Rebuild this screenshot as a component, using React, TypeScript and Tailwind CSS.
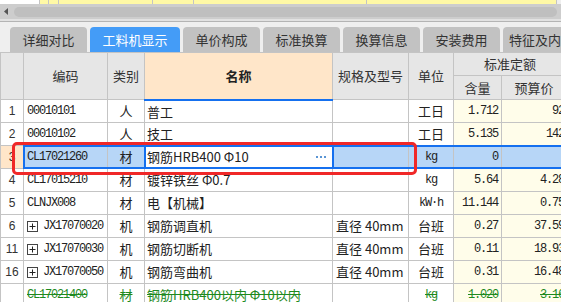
import React from 'react';

const CJK = "font-['Noto_Sans_CJK_SC','Noto_Sans',sans-serif]";
const MONO = "font-['Liberation_Mono','Noto_Sans_CJK_SC',monospace] text-[12px] tracking-[-1.2px]";

type Row = {
  num: string;
  code: string;
  tree?: boolean;
  type: string;
  name: string;
  spec: string;
  unit: string;
  qty: string;
  price: string;
};

const rows: Row[] = [
  { num: '1', code: '00010101', type: '人', name: '普工', spec: '', unit: '工日', qty: '1.712', price: '92' },
  { num: '2', code: '00010102', type: '人', name: '技工', spec: '', unit: '工日', qty: '5.135', price: '142' },
  { num: '3', code: 'CL17021260', type: '材', name: '钢筋HRB400 Φ10', spec: '', unit: 'kg', qty: '0', price: '' },
  { num: '4', code: 'CL17015210', type: '材', name: '镀锌铁丝 Φ0.7', spec: '', unit: 'kg', qty: '5.64', price: '4.28' },
  { num: '5', code: 'CLNJX008', type: '材', name: '电【机械】', spec: '', unit: 'kW·h', qty: '11.144', price: '0.75' },
  { num: '6', code: 'JX17070020', tree: true, type: '机', name: '钢筋调直机', spec: '直径 40mm', unit: '台班', qty: '0.27', price: '37.59' },
  { num: '11', code: 'JX17070030', tree: true, type: '机', name: '钢筋切断机', spec: '直径 40mm', unit: '台班', qty: '0.11', price: '18.93' },
  { num: '16', code: 'JX17070050', tree: true, type: '机', name: '钢筋弯曲机', spec: '直径 40mm', unit: '台班', qty: '0.31', price: '16.48' },
];

const tabs = ['详细对比', '工料机显示', '单价构成', '标准换算', '换算信息', '安装费用', '特征及内容'];

function PlusBox() {
  return (
    <svg width="11" height="11" viewBox="0 0 11 11" className="shrink-0">
      <rect x="0.5" y="0.5" width="10" height="10" fill="white" stroke="#444" />
      <path d="M2.5 5.5h6M5.5 2.5v6" stroke="#222" strokeWidth="1" />
    </svg>
  );
}

function Dots() {
  return (
    <svg width="10" height="2" viewBox="0 0 10 2" className="shrink-0">
      <rect x="0" y="0" width="2" height="2" fill="#5a95d4" />
      <rect x="4" y="0" width="2" height="2" fill="#5a95d4" />
      <rect x="8" y="0" width="2" height="2" fill="#5a95d4" />
    </svg>
  );
}

export default function App() {
  const cell = 'border border-[#c4c4c4] h-[23px] p-0 align-middle';
  const head = 'border border-[#c4c4c4] bg-[#e6e6e6] text-[13px] text-[#333] font-normal p-0';
  return (
    <div className={`relative w-[561px] h-[302px] overflow-hidden bg-[#efefef] ${CJK}`}>
      {/* yellow row remnant */}
      <div className="flex h-[4px] overflow-hidden">
        <div className="w-[40px] bg-white border-r border-[#c4c4c4]" />
        <div className="w-[9px] bg-[#fff9a6] border-r border-[#c4c4c4]" />
        <div className="w-[10px] bg-[#fff9a6] border-r border-[#c4c4c4]" />
        <div className="w-[94px] bg-[#fff9a6] border-r border-[#c4c4c4]" />
        <div className="w-[41px] bg-[#fff9a6] border-r border-[#c4c4c4]" />
        <div className="w-[173px] bg-[#fff9a6] border-r border-[#c4c4c4]" />
        <div className="w-[190px] bg-[#fff9a6] border-r border-[#c4c4c4]" />
      </div>

      {/* horizontal scrollbar */}
      <div className="flex items-center h-[15px] bg-[#cdcdcd] px-[4px] gap-[5px]">
        <svg width="5" height="7" viewBox="0 0 5 7">
          <path d="M4 0v7L0 3.5z" fill="#555" />
        </svg>
        <div className="flex-1 h-[10px] rounded-[5px] bg-[#bfbfbf]" />
      </div>
      <div className="h-[2px] bg-[#e2e2e2]" />
      <div className="h-[1px] bg-[#b4b4b4]" />

      {/* tabs */}
      <div className="flex items-end h-[30px] pl-[10px] gap-[3px] overflow-hidden">
        {tabs.map((t, i) => (
          <div
            key={t}
            className={
              i === 1
                ? 'shrink-0 w-[90px] h-[25px] rounded-t-[4px] bg-[#449cf7] text-white text-[13px] flex items-center justify-center'
                : 'shrink-0 w-[77px] h-[25px] rounded-t-[4px] bg-[#c2c2c2] text-[#333] text-[13px] flex items-center justify-center whitespace-nowrap'
            }
          >
            {t}
          </div>
        ))}
      </div>

      {/* grid */}
      <div className="relative w-[566px]">
        <table className="table-fixed border-collapse w-[566px] bg-white">
          <colgroup>
            <col className="w-[23px]" />
            <col className="w-[84px]" />
            <col className="w-[37px]" />
            <col className="w-[188px]" />
            <col className="w-[76px]" />
            <col className="w-[45px]" />
            <col className="w-[48px]" />
            <col className="w-[65px]" />
          </colgroup>
          <thead>
            <tr className="h-[23px]">
              <th rowSpan={2} className={head} />
              <th rowSpan={2} className={head}>编码</th>
              <th rowSpan={2} className={head}>类别</th>
              <th rowSpan={2} className="border border-[#c4c4c4] border-b-2 border-b-[#1570ef] bg-[#ffe6c9] text-[13px] text-[#222] font-bold p-0">
                名称
              </th>
              <th rowSpan={2} className={head}>规格及型号</th>
              <th rowSpan={2} className={head}>单位</th>
              <th colSpan={2} className={head}>标准定额</th>
            </tr>
            <tr className="h-[24px]">
              <th className={head}>含量</th>
              <th className={head}>预算价</th>
            </tr>
          </thead>
          <tbody>
            {rows.map((r) => {
              const sel = r.num === '3';
              const selBg = sel ? 'bg-[#b7d6f7]' : '';
              return (
                <tr key={r.num} className="h-[23px]">
                  <td className={`${cell} text-center text-[12px] text-[#333] font-['Liberation_Sans',sans-serif] ${sel ? 'bg-[#ffe6c9]' : ''}`}>
                    {r.num}
                  </td>
                  <td className={`${cell} ${selBg}`}>
                    <div className="flex items-center gap-[5px] pl-[3px] whitespace-nowrap overflow-hidden">
                      {r.tree && <PlusBox />}
                      <span className={`${MONO} text-[#222]`}>{r.code}</span>
                    </div>
                  </td>
                  <td className={`${cell} ${selBg} text-center text-[13px] text-[#222]`}>{r.type}</td>
                  <td className={`${cell} text-[13px] text-[#222]`}>
                    <div className="flex items-center justify-between pl-[2px] pr-[6px] whitespace-nowrap overflow-hidden">
                      <span>{r.name}</span>
                      {sel && <Dots />}
                    </div>
                  </td>
                  <td className={`${cell} ${selBg} pl-[3px] text-[13px] text-[#222] whitespace-nowrap`}>
                    {r.spec}
                  </td>
                  <td className={`${cell} ${selBg} text-center whitespace-nowrap ${r.unit === '工日' || r.unit === '台班' ? 'text-[13px]' : MONO} text-[#222]`}>
                    {r.unit}
                  </td>
                  <td className={`${cell} ${sel ? selBg : 'bg-[#fffdea]'} text-right pr-[3px] ${MONO} text-[#222]`}>{r.qty}</td>
                  <td className={`${cell} ${sel ? selBg : 'bg-[#fffdea]'} text-right pr-[2px] ${MONO} text-[#222]`}>{r.price}</td>
                </tr>
              );
            })}
            <tr className="h-[23px] text-[#1e8a1e]">
              <td className={cell} />
              <td className={`${cell} pl-[3px] ${MONO} line-through`}>CL17021400</td>
              <td className={`${cell} text-center text-[13px] line-through`}>材</td>
              <td className={`${cell} pl-[2px] text-[13px] whitespace-nowrap line-through`}>钢筋HRB400以内 Φ10以内</td>
              <td className={cell} />
              <td className={`${cell} text-center ${MONO} line-through`}>kg</td>
              <td className={`${cell} bg-[#fffdea] text-right pr-[3px] ${MONO} line-through`}>1.020</td>
              <td className={`${cell} bg-[#fffdea] text-right pr-[2px] ${MONO} line-through`}>3.16</td>
            </tr>
          </tbody>
        </table>

        {/* selection outline of current row and edited cell */}
        <div className="absolute left-[23px] top-[93px] w-[545px] h-[24px] border-2 border-[#1570ef] pointer-events-none" />
        <div className="absolute left-[144px] top-[93px] w-[190px] h-[24px] border-2 border-[#1570ef] pointer-events-none" />
      </div>

      {/* red annotation box */}
      <div className="absolute left-[12px] top-[142px] w-[405px] h-[33px] border-[3px] border-[#f02828] rounded-[5px] pointer-events-none" />
    </div>
  );
}
